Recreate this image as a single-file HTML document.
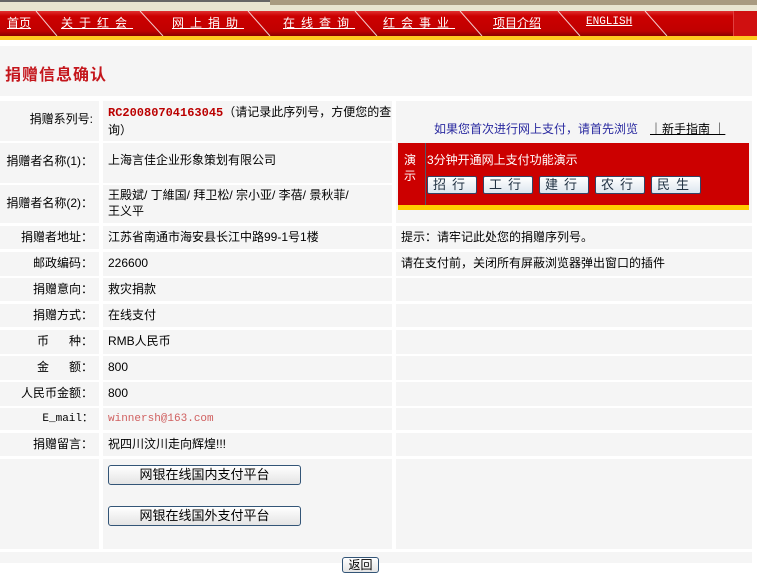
<!DOCTYPE html>
<html><head><meta charset="utf-8"><style>
*{margin:0;padding:0;box-sizing:border-box}
body{width:757px;height:563px;background:#fff;position:relative;overflow:hidden;font-family:"Liberation Sans","SimSun","Noto Sans CJK SC",sans-serif;font-size:12px;color:#000}
.a{position:absolute}
.c{position:absolute;background:#f5f5f5}
.l{text-align:right;padding-right:6px;line-height:23px}
.v{padding-left:5px;line-height:23px}
.nav a{position:absolute;top:14px;color:#fff;text-decoration:underline;font-size:12px;letter-spacing:6px;white-space:nowrap}
.btn{position:absolute;border:1px solid #335577;border-radius:3px;background:linear-gradient(#fff,#e4e4e4);text-align:center;font-size:12px}
.bk{position:absolute;top:176px;width:50px;height:18px;border:1px solid #334466;border-radius:2px;background:linear-gradient(#fff,#dde6ee);color:#234;text-align:center;line-height:16px;letter-spacing:6px;font-size:13px}
</style></head><body>
<div class="a" style="left:0;top:0;width:757px;height:2px;background:#666"></div>
<div class="a" style="left:0;top:2px;width:757px;height:9px;background:#e8e4d0"></div>
<div class="a" style="left:270px;top:0;width:487px;height:5px;background:#a89a80"></div>
<div class="a" style="left:0;top:11px;width:757px;height:25px;background:linear-gradient(#e03030,#cc0000 20%,#c00000 80%,#8a0000)"></div>
<div class="a" style="left:733px;top:11px;width:24px;height:25px;background:#d01010;border-left:1px solid #e04040"></div>
<div class="a" style="left:0;top:36px;width:757px;height:4px;background:#ffc820"></div>
<svg class="a" style="left:0;top:11px" width="757" height="25"><g stroke="#fff" stroke-width="1" opacity=".8">
<line x1="36" y1="0" x2="57" y2="25"/><line x1="140" y1="0" x2="163" y2="25"/><line x1="248" y1="0" x2="270" y2="25"/><line x1="355" y1="0" x2="377" y2="25"/><line x1="460" y1="0" x2="482" y2="25"/><line x1="558" y1="0" x2="580" y2="25"/><line x1="645" y1="0" x2="667" y2="25"/></g></svg>
<div class="nav">
<a style="left:7px;letter-spacing:0">首页</a>
<a style="left:61px">关于红会</a>
<a style="left:172px">网上捐助</a>
<a style="left:283px">在线查询</a>
<a style="left:383px">红会事业</a>
<a style="left:493px;letter-spacing:0">项目介绍</a>
<a style="left:586px;letter-spacing:0;font-family:'Liberation Mono',monospace;font-size:11px;top:16px">ENGLISH</a>
</div>
<div class="c" style="left:0;top:46px;width:752px;height:50px"></div>
<div class="a" style="left:5px;top:61px;color:#c4161c;font-weight:bold;font-size:16px;letter-spacing:1px">捐赠信息确认</div>

<div class="c l" style="left:0;top:101px;width:99px;height:40px;line-height:36px">捐赠系列号:</div>
<div class="c v" style="left:103px;top:101px;width:289px;height:40px;line-height:17px;padding-top:3px"><b style="color:#b00;font-family:'Liberation Mono',monospace">RC20080704163045</b>（请记录此序列号，方便您的查询）</div>
<div class="c" style="left:396px;top:101px;width:356px;height:122px"></div>
<div class="a" style="left:434px;top:120px;color:#2a2aa0">如果您首次进行网上支付，请首先浏览</div>
<div class="a" style="left:650px;top:120px;text-decoration:underline">｜新手指南 ｜</div>
<div class="a" style="left:398px;top:143px;width:351px;height:62px;background:#cc0000"></div>
<div class="a" style="left:425px;top:143px;width:1px;height:62px;background:#556"></div>
<div class="a" style="left:398px;top:205px;width:351px;height:5px;background:#ffcc00"></div>
<div class="a" style="left:404px;top:152px;color:#fff;width:14px;line-height:16px">演示</div>
<div class="a" style="left:427px;top:151px;color:#fff">3分钟开通网上支付功能演示</div>
<div class="bk" style="left:427px">招行</div>
<div class="bk" style="left:483px">工行</div>
<div class="bk" style="left:539px">建行</div>
<div class="bk" style="left:595px">农行</div>
<div class="bk" style="left:651px">民生</div>

<div class="c l" style="left:0;top:143px;width:99px;height:40px;line-height:36px">捐赠者名称(1)：</div>
<div class="c v" style="left:103px;top:143px;width:289px;height:40px;line-height:34px">上海言佳企业形象策划有限公司</div>
<div class="c l" style="left:0;top:185px;width:99px;height:38px;line-height:36px">捐赠者名称(2)：</div>
<div class="c v" style="left:103px;top:185px;width:289px;height:38px;line-height:16px;padding-top:2px">王殿斌/ 丁維国/ 拜卫松/ 宗小亚/ 李蓓/ 景秋菲/<br>王义平</div>

<div class="c l" style="left:0;top:226px;width:99px;height:23px">捐赠者地址：</div>
<div class="c v" style="left:103px;top:226px;width:289px;height:23px">江苏省南通市海安县长江中路99-1号1楼</div>
<div class="c v" style="left:396px;top:226px;width:356px;height:23px">提示：请牢记此处您的捐赠序列号。</div>

<div class="c l" style="left:0;top:252px;width:99px;height:24px">邮政编码：</div>
<div class="c v" style="left:103px;top:252px;width:289px;height:24px">226600</div>
<div class="c v" style="left:396px;top:252px;width:356px;height:24px">请在支付前，关闭所有屏蔽浏览器弹出窗口的插件</div>

<div class="c l" style="left:0;top:278px;width:99px;height:23px">捐赠意向：</div>
<div class="c v" style="left:103px;top:278px;width:289px;height:23px">救灾捐款</div>
<div class="c" style="left:396px;top:278px;width:356px;height:23px"></div>

<div class="c l" style="left:0;top:304px;width:99px;height:23px">捐赠方式：</div>
<div class="c v" style="left:103px;top:304px;width:289px;height:23px">在线支付</div>
<div class="c" style="left:396px;top:304px;width:356px;height:23px"></div>

<div class="c l" style="left:0;top:330px;width:99px;height:24px">币&nbsp;&nbsp;&nbsp;&nbsp;&nbsp;&nbsp;种：</div>
<div class="c v" style="left:103px;top:330px;width:289px;height:24px">RMB人民币</div>
<div class="c" style="left:396px;top:330px;width:356px;height:24px"></div>

<div class="c l" style="left:0;top:356px;width:99px;height:24px">金&nbsp;&nbsp;&nbsp;&nbsp;&nbsp;&nbsp;额：</div>
<div class="c v" style="left:103px;top:356px;width:289px;height:24px">800</div>
<div class="c" style="left:396px;top:356px;width:356px;height:24px"></div>

<div class="c l" style="left:0;top:382px;width:99px;height:24px">人民币金额：</div>
<div class="c v" style="left:103px;top:382px;width:289px;height:24px">800</div>
<div class="c" style="left:396px;top:382px;width:356px;height:24px"></div>

<div class="c l" style="left:0;top:408px;width:99px;height:22px;font-family:'Liberation Mono',monospace;font-size:11px">E_mail：</div>
<div class="c v" style="left:103px;top:408px;width:289px;height:22px;color:#d06060;font-family:'Liberation Mono',monospace;font-size:11px">winnersh@163.com</div>
<div class="c" style="left:396px;top:408px;width:356px;height:22px"></div>

<div class="c l" style="left:0;top:433px;width:99px;height:23px">捐赠留言：</div>
<div class="c v" style="left:103px;top:433px;width:289px;height:23px">祝四川汶川走向辉煌!!!</div>
<div class="c" style="left:396px;top:433px;width:356px;height:23px"></div>

<div class="c" style="left:0;top:459px;width:99px;height:90px"></div>
<div class="c" style="left:103px;top:459px;width:289px;height:90px"></div>
<div class="c" style="left:396px;top:459px;width:356px;height:90px"></div>
<div class="btn" style="left:108px;top:465px;width:193px;height:20px;line-height:18px;font-size:13px">网银在线国内支付平台</div>
<div class="btn" style="left:108px;top:506px;width:193px;height:20px;line-height:18px;font-size:13px">网银在线国外支付平台</div>

<div class="c" style="left:0;top:552px;width:752px;height:11px"></div>
<div class="btn" style="left:342px;top:557px;width:37px;height:16px;line-height:14px">返回</div>
</body></html>
